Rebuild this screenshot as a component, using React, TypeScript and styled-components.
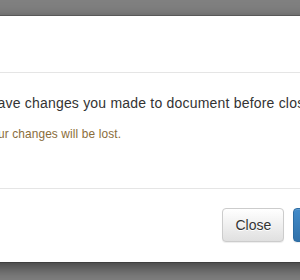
import React from "react";
import styled, { createGlobalStyle } from "styled-components";

const GlobalStyle = createGlobalStyle`
  html, body {
    margin: 0;
    padding: 0;
    width: 300px;
    height: 280px;
    overflow: hidden;
    background: #fff;
  }

  * {
    box-sizing: border-box;
  }
`;

function App() {
  return (
    <>
      <GlobalStyle />
      <Backdrop>
        <Dialog>
          <Header>
            <Title>Confirmation</Title>
            <CloseX type="button">&times;</CloseX>
          </Header>
          <Body>
            <Text>Do you want to save changes you made to document before closing?</Text>
            <Warning>
              <small>If you don't save, your changes will be lost.</small>
            </Warning>
          </Body>
          <Footer>
            <Button type="button">Close</Button>
            <Button type="button" $primary>
              Save changes
            </Button>
          </Footer>
        </Dialog>
      </Backdrop>
    </>
  );
}

export default App;

const Backdrop = styled.div`
  width: 300px;
  height: 280px;
  padding-top: 15px;
  overflow: hidden;

  background-color: #808080;
`;

const Dialog = styled.div`
  width: 560px;
  margin-left: -131px;

  border: 1px solid rgba(0, 0, 0, 0.2);
  border-radius: 6px;
  background-color: #fff;
  background-clip: padding-box;
  box-shadow: 0 5px 15px rgba(0, 0, 0, 0.5);

  font-family: "Liberation Sans", Arial, sans-serif;
  font-size: 14px;
  line-height: 1.428571429;
  color: #333;
`;

const Header = styled.div`
  display: flex;
  align-items: center;
  justify-content: space-between;
  padding: 15px;

  border-bottom: 1px solid #e5e5e5;
`;

const Title = styled.h4`
  margin: 0;

  font-size: 18px;
  font-weight: 500;
  line-height: 1.428571429;
`;

const CloseX = styled.button`
  padding: 0;
  border: 0;
  background: transparent;

  font-family: inherit;
  font-size: 21px;
  font-weight: 700;
  line-height: 1;
  color: #000;
  opacity: 0.2;
`;

const Body = styled.div`
  padding: 20px;
`;

const Text = styled.p`
  margin: 0 0 10px;

  letter-spacing: 0.2px;
  white-space: nowrap;
`;

const Warning = styled.p`
  margin: 0 0 10px;

  color: #8a6d3b;
  letter-spacing: 0.12px;

  small {
    font-size: 85%;
  }
`;

const Footer = styled.div`
  display: flex;
  justify-content: flex-end;
  gap: 9px;
  margin-top: 15px;
  padding: 19px 20px 20px;

  border-top: 1px solid #e5e5e5;
`;

const Button = styled.button<{ $primary?: boolean }>`
  display: inline-block;
  height: 34px;
  padding: 6px 12px;

  border: 1px solid ${(p) => (p.$primary ? "#2d6ca2" : "#ccc")};
  border-radius: 4px;
  background-image: ${(p) =>
    p.$primary
      ? "linear-gradient(to bottom, #428bca 0%, #3071a9 100%)"
      : "linear-gradient(to bottom, #ffffff 0%, #e0e0e0 100%)"};
  box-shadow: inset 0 1px 0 rgba(255, 255, 255, 0.15),
    0 1px 1px rgba(0, 0, 0, 0.075);

  font-family: "Liberation Sans", Arial, sans-serif;
  font-size: 14px;
  line-height: 1.428571429;
  color: ${(p) => (p.$primary ? "#fff" : "#333")};
  text-shadow: ${(p) =>
    p.$primary ? "0 -1px 0 rgba(0, 0, 0, 0.2)" : "0 1px 0 #fff"};
  white-space: nowrap;
`;
